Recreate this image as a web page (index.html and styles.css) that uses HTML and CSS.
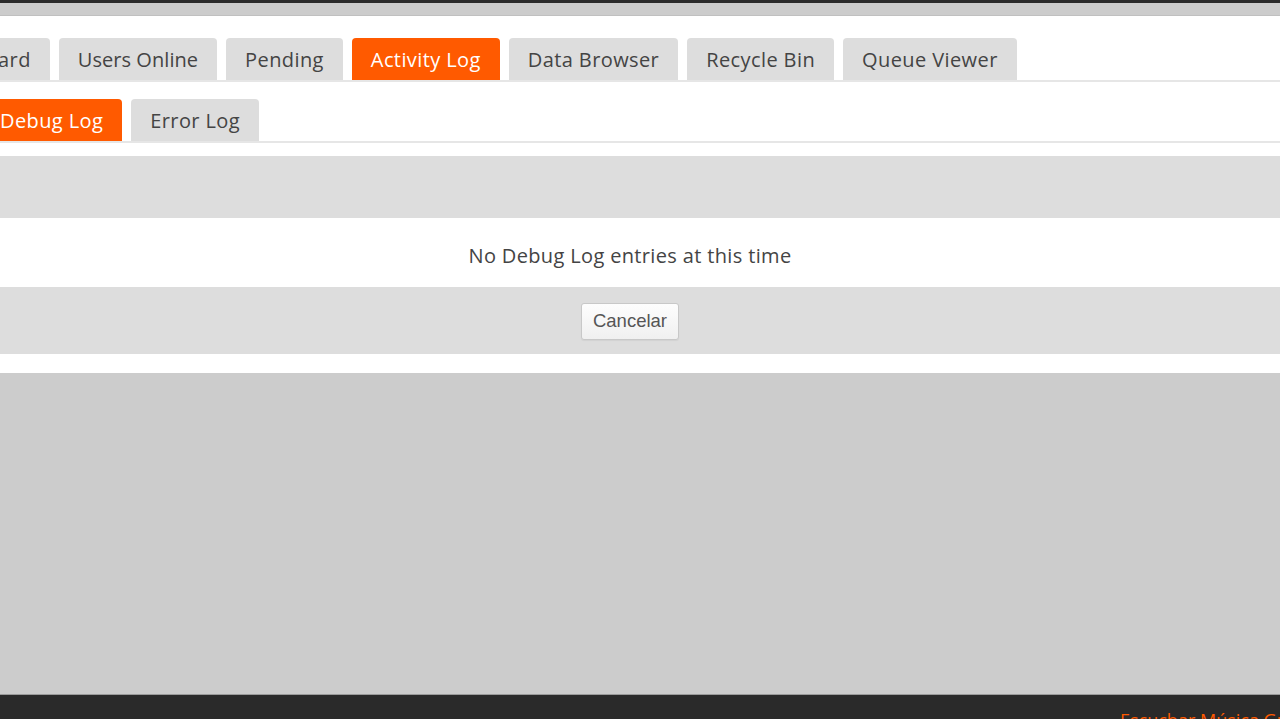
FILE: index.html
```html
<!DOCTYPE html>
<html lang="en">
<head>
<meta charset="utf-8">
<title>Activity Log</title>
<link rel="stylesheet" href="styles.css">
</head>
<body>
<div class="page">
  <div class="topbar"></div>
  <div class="strip"></div>
  <div class="panel">
    <nav class="tabs main-tabs">
      <a class="tab">Dashboard</a>
      <a class="tab tab-tight">Users Online</a>
      <a class="tab">Pending</a>
      <a class="tab active">Activity Log</a>
      <a class="tab">Data Browser</a>
      <a class="tab">Recycle Bin</a>
      <a class="tab">Queue Viewer</a>
    </nav>
    <nav class="tabs sub-tabs">
      <a class="tab active">Debug Log</a>
      <a class="tab">Error Log</a>
    </nav>
    <div class="bar bar-head"></div>
    <div class="message">No Debug Log entries at this time</div>
    <div class="bar bar-actions">
      <button class="btn" type="button">Cancelar</button>
    </div>
  </div>
  <div class="canvas"></div>
  <footer class="footer">
    <span class="footer-link">Escuchar Música Gratis</span>
  </footer>
</div>
</body>
</html>
```

FILE: styles.css
```css
html, body {
  margin: 0;
  padding: 0;
  height: 100%;
  overflow: hidden;
}
body {
  background: #cccccc;
  font-family: "Open Sans", "Noto Sans", sans-serif;
  color: #444;
}
.page {
  display: flex;
  flex-direction: column;
  height: 719px;
  overflow: hidden;
}
.topbar {
  height: 3px;
  background: #2b2b2b;
  flex: none;
}
.strip {
  height: 12px;
  background: #cccccc;
  border-bottom: 1px solid #c2c2c2;
  flex: none;
}
.panel {
  background: #fff;
  padding: 22px 0 19px;
  margin-left: -20px;
  flex: none;
  box-shadow: 0 1px 2px rgba(0,0,0,0.12);
}
.tabs {
  display: flex;
  gap: 9px;
  height: 42px;
  border-bottom: 2px solid #e6e6e6;
  white-space: nowrap;
}
.main-tabs {
  margin-left: -75px;
}
.sub-tabs {
  margin-top: 17px;
  margin-left: 1px;
}
.tab {
  display: flex;
  align-items: center;
  padding: 0 19px;
  background: #dddddd;
  border-radius: 4px 4px 0 0;
  font-size: 20px;
  letter-spacing: 0.4px;
  font-weight: 500;
  color: #444;
  flex: none;
}
.tab-tight {
  letter-spacing: 0.05px;
}
.tab.active {
  background: #ff5a00;
  color: #fff;
}
.bar {
  background: #dddddd;
}
.bar-head {
  margin-top: 13px;
  height: 62px;
}
.message {
  height: 69px;
  display: flex;
  align-items: center;
  justify-content: center;
  padding-top: 5px;
  box-sizing: border-box;
  font-size: 20px;
  letter-spacing: 0.35px;
  color: #444;
}
.bar-actions {
  height: 67px;
  display: flex;
  align-items: center;
  justify-content: center;
}
.btn {
  width: 98px;
  height: 37px;
  background: linear-gradient(#fdfdfd, #f0f0f0);
  border: 1px solid #c8c8c8;
  border-radius: 3px;
  font-family: "Liberation Sans", Arial, sans-serif;
  font-size: 18.5px;
  color: #555;
  margin-top: 1px;
  box-shadow: 0 1px 1px rgba(0,0,0,0.05);
}
.canvas {
  flex: 1;
  background: #cccccc;
}
.footer {
  height: 24px;
  flex: none;
  background: #2a2a2a;
  border-top: 1px solid #9a9a9a;
  position: relative;
  overflow: hidden;
}
.footer-link {
  position: absolute;
  left: 1120px;
  top: 13px;
  white-space: nowrap;
  color: #ff5a00;
  font-size: 18px;
}
```
